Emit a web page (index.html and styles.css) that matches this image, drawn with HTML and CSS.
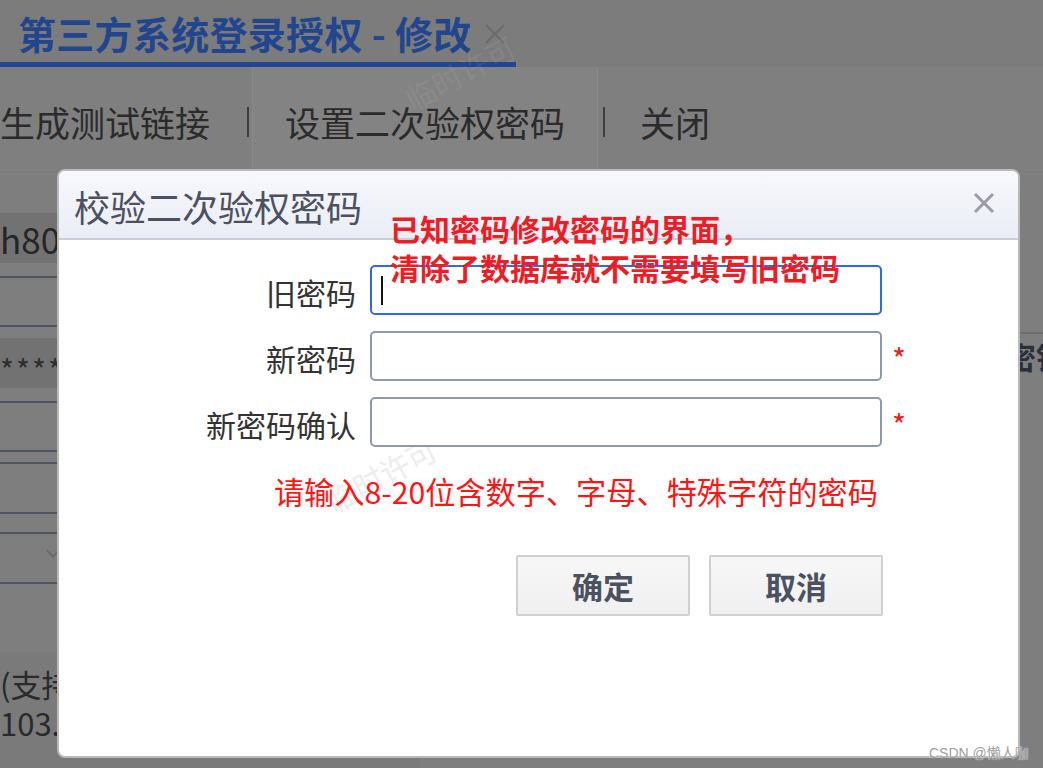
FILE: index.html
```html
<!DOCTYPE html>
<html lang="zh-CN">
<head>
<meta charset="utf-8">
<title>校验二次验权密码</title>
<link rel="stylesheet" href="styles.css">
</head>
<body>
<div class="page">
  <div class="tabbar">
    <div class="tab">
      <span class="tab-title">第三方系统登录授权 - 修改</span>
      <svg class="tab-close" width="22" height="22" viewBox="0 0 22 22"><path d="M2 2 L20 20 M20 2 L2 20" stroke="#6b6b6b" stroke-width="2.2" fill="none"/></svg>
    </div>
  </div>
  <div class="toolbar">
    <div class="tool first">生成测试链接</div>
    <div class="sep"></div>
    <div class="tool active">设置二次验权密码</div>
    <div class="sep"></div>
    <div class="tool">关闭</div>
  </div>
  <div class="content">
    <div class="left">
      <div class="band">h80Vq7kz</div>
      <div class="cell h13"></div>
      <div class="cell h47"></div>
      <div class="band band2">**********</div>
      <div class="cell h13"></div>
      <div class="cell h47"></div>
      <div class="cell h10"></div>
      <div class="cell h48"></div>
      <div class="cell h18"></div>
      <div class="cell h48"><span class="chev"></span></div>
      <div class="foot">
        <div class="foot-line">(支持多个</div>
        <div class="foot-line">103.1</div>
      </div>
    </div>
    <div class="right">
      <div class="right-label">密钥</div>
    </div>
  </div>
  <span class="wm wm-top">临时许可</span>
</div>

<div class="dialog">
  <div class="dlg-head">
    <span class="dlg-title">校验二次验权密码</span>
    <svg class="dlg-close" width="22" height="22" viewBox="0 0 22 22"><path d="M2 2 L20 20 M20 2 L2 20" stroke="#9a9ca6" stroke-width="3" fill="none"/></svg>
  </div>
  <div class="dlg-body">
    <span class="wm wm-dlg">临时许可</span>
    <div class="form">
      <label class="lbl">旧密码</label>
      <div class="input focus"><span class="caret"></span></div>
      <span class="star"></span>

      <label class="lbl">新密码</label>
      <div class="input"></div>
      <span class="star">*</span>

      <label class="lbl">新密码确认</label>
      <div class="input"></div>
      <span class="star">*</span>

      <div class="hint">请输入8-20位含数字、字母、特殊字符的密码</div>
      <div class="actions">
        <button class="btn">确定</button>
        <button class="btn">取消</button>
      </div>
    </div>
  </div>
  <div class="note">已知密码修改密码的界面，<br>清除了数据库就不需要填写旧密码</div>
</div>

<div class="csdn">CSDN @懒人咖</div>
</body>
</html>
```
FILE: styles.css
```css
* { box-sizing: border-box; }
html, body { margin: 0; padding: 0; }
body {
  width: 1043px;
  height: 768px;
  overflow: hidden;
  position: relative;
  background: #7e7e7e;
  font-family: "Noto Sans CJK SC", "Noto Sans", sans-serif;
  color: #2a2a2a;
}
.page { position: relative; width: 1043px; height: 768px; }

.tabbar { height: 67px; background: #7c7c7c; }
.tab {
  width: 516px;
  height: 67px;
  padding: 4px 0 0 18px;
  display: flex;
  align-items: center;
  border-bottom: 5px solid #1f4593;
}
.tab-title {
  font-size: 38px;
  font-weight: 700;
  color: #22468e;
  line-height: 1;
  white-space: nowrap;
  letter-spacing: 0.3px;
}
.tab-close { margin-left: 12px; margin-top: 2px; }

.toolbar {
  height: 105px;
  display: flex;
  align-items: stretch;
  background: #7f7f7f;
  border-bottom: 1px solid #7a7a7a;
}
.tool {
  display: flex;
  align-items: center;
  padding: 4px 32px 0;
  font-size: 35px;
  color: #2b2b2b;
  white-space: nowrap;
}
.tool.first { padding-left: 0; }
.tool.active { background: #838383; border-left: 1px solid #8a8a8a; border-right: 1px solid #8a8a8a; }
.sep {
  width: 2px;
  height: 30px;
  align-self: center;
  margin: 6px 3px 0 5px;
  background: #3e3e3e;
}

.content { display: flex; height: 596px; }
.left { width: 420px; padding-top: 41px; display: flex; flex-direction: column; }
.band {
  height: 50px;
  background: #727272;
  font-size: 35px;
  line-height: 52px;
  color: #252525;
  white-space: nowrap;
  overflow: hidden;
}
.band2 { margin-top: 11px; font-size: 30px; line-height: 62px; letter-spacing: 2px; color: #2e2e2e; }
.cell { border-bottom: 2px solid #4e5360; position: relative; }
.h10 { height: 12px; }
.h13 { height: 15px; }
.h18 { height: 20px; }
.h47 { height: 49px; }
.h48 { height: 50px; }
.chev {
  position: absolute;
  left: 48px;
  top: 12px;
  width: 10px;
  height: 10px;
  border-right: 2px solid #6a6a6a;
  border-bottom: 2px solid #6a6a6a;
  transform: rotate(45deg);
}
.foot {
  margin-top: 68px;
  flex: 1;
  background: #7a7a7a;
  padding-top: 12px;
  font-size: 31px;
  line-height: 39px;
  color: #2a2a2a;
  white-space: nowrap;
}
.right {
  margin-left: auto;
  width: 37px;
  overflow: hidden;
  padding-top: 160px;
}
.right-label {
  border-top: 2px solid #6e6e6e;
  font-size: 30px;
  font-weight: 700;
  color: #2a2f3a;
  white-space: nowrap;
  line-height: 44px;
}

.wm {
  position: absolute;
  font-size: 30px;
  white-space: nowrap;
  transform: rotate(-28deg);
  pointer-events: none;
}
.wm-top { left: 400px; top: 50px; color: rgba(255,255,255,0.07); }
.wm-dlg { left: 262px; top: 212px; color: #ededed; }

.dialog {
  position: absolute;
  left: 57px;
  top: 169px;
  width: 963px;
  height: 589px;
  background: #fff;
  border: 2px solid #b9b9b9;
  border-radius: 8px;
  overflow: hidden;
}
.dlg-head {
  height: 69px;
  display: flex;
  align-items: center;
  justify-content: space-between;
  padding: 0 23px 0 15px;
  background: linear-gradient(#f7f8fc, #eaedf5);
  border-bottom: 2px solid #c9ced8;
}
.dlg-title {
  font-size: 36px;
  color: #4b5160;
  line-height: 1;
  padding-top: 2px;
}
.dlg-close { margin-top: -4px; }

.dlg-body { position: relative; padding-top: 25px; }
.form {
  position: relative;
  display: grid;
  grid-template-columns: 297px 512px 40px;
  column-gap: 14px;
  row-gap: 16px;
  align-items: center;
}
.lbl {
  text-align: right;
  font-size: 30px;
  color: #333;
  line-height: 40px;
  padding-top: 4px;
}
.input {
  height: 50px;
  border: 2px solid #8e99ad;
  border-radius: 5px;
  background: #fff;
  position: relative;
}
.input.focus { border-color: #2e6ae6; }
.caret {
  position: absolute;
  left: 9px;
  top: 9px;
  width: 2px;
  height: 29px;
  background: #111;
}
.star {
  color: #e8201a;
  font-size: 30px;
  line-height: 1;
  margin-left: -4px;
  margin-top: 4px;
}
.hint {
  grid-column: 1 / 3;
  text-align: right;
  padding-right: 4px;
  margin-top: 8px;
  font-size: 30.2px;
  line-height: 40px;
  color: #ff1414;
  white-space: nowrap;
}
.actions {
  grid-column: 1 / 3;
  display: flex;
  justify-content: flex-end;
  gap: 19px;
  margin-top: 28px;
  margin-right: -1px;
}
.btn {
  width: 174px;
  height: 61px;
  border: 2px solid #cfd0d5;
  border-radius: 2px;
  background: linear-gradient(#f7f7f7, #f0f0f0);
  font-family: "Noto Sans CJK SC", sans-serif;
  font-size: 31px;
  font-weight: 700;
  color: #4b5160;
  padding: 0;
}

.note {
  position: absolute;
  left: 331px;
  top: 38px;
  font-size: 30px;
  font-weight: 700;
  line-height: 39px;
  color: #ee1c25;
  white-space: nowrap;
}

.csdn {
  position: absolute;
  left: 929px;
  top: 742px;
  font-family: "Liberation Sans", "Noto Sans CJK SC", sans-serif;
  font-size: 14px;
  color: #9d9d9d;
  text-shadow: 0 0 1px #fff;
  white-space: nowrap;
}
```
